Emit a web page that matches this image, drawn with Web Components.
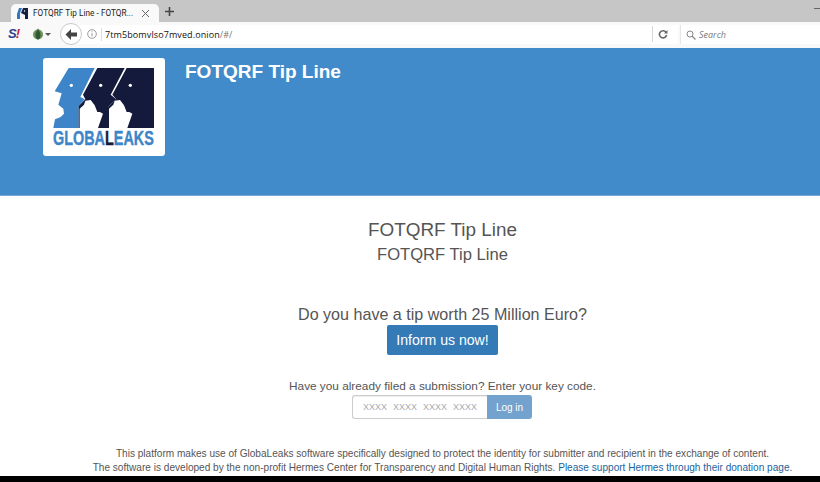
<!DOCTYPE html>
<html>
<head>
<meta charset="utf-8">
<title>FOTQRF Tip Line</title>
<style>
  html, body { margin: 0; height: 100%; overflow: hidden; background: #fff; }
  body { display: flex; flex-direction: column; height: 482px; font-family: "Liberation Sans", Arial, sans-serif; color: #555; }
</style>
</head>
<body>
<browser-chrome></browser-chrome>
<site-header>FOTQRF Tip Line</site-header>
<tip-content></tip-content>
<script>
class BrowserChrome extends HTMLElement {
  constructor() {
    super();
    this.attachShadow({ mode: "open" });
    this.shadowRoot.innerHTML = `
      <style>
        :host { display: block; height: 48px; flex: none; font-family: Roboto, sans-serif; }
        .tabs { height: 22px; background: #c6c6c6; display: flex; align-items: flex-end; position: relative; }
        .tab { width: 148px; height: 18px; margin-left: 11px; background: #f9f9f9; border-radius: 5px 5px 0 0; display: flex; align-items: center; padding: 0 9px 0 6px; box-sizing: border-box; font-size: 8.200px; letter-spacing: .05px; color: #222; gap: 5px; }
        .tab span { flex: 1; white-space: nowrap; }
        .plus { margin-left: 6px; height: 22px; display: flex; align-items: center; }
        .min { position: absolute; right: 0; top: 8px; width: 6px; height: 1px; background: #666; }
        .bar { height: 26px; background: #f9f9f9; display: flex; align-items: center; position: relative; }
        .s { position: absolute; left: 8px; top: 4px; font: italic bold 13px "Liberation Sans", sans-serif; color: #2b3f8f; letter-spacing: -1px; }
        .s b { color: #d3202a; }
        .onion { position: absolute; left: 32px; top: 6px; }
        .back { position: absolute; left: 60px; top: 1px; width: 22px; height: 22px; border-radius: 50%; background: #fff; border: 1px solid #c9c9c9; box-sizing: border-box; display: flex; align-items: center; justify-content: center; z-index: 1; }
        .url { position: absolute; left: 72px; top: 3px; width: 606px; height: 19px; background: #fff; display: flex; align-items: center; box-sizing: border-box; }
        .info { position: absolute; left: 15px; top: 4px; }
        .sep { position: absolute; left: 29px; top: 3px; height: 13px; width: 1px; background: #ddd; }
        .addr { margin-left: 33px; font: 9px "Open Sans", sans-serif; color: #111; letter-spacing: .1px; }
        .addr i { font-style: normal; color: #777; }
        .reload { position: absolute; right: 0; top: 1px; height: 16px; width: 26px; border-left: 1px solid #d8d8d8; display: flex; align-items: center; padding-left: 5px; box-sizing: border-box; }
        .search { position: absolute; left: 680px; right: 0; top: 3px; height: 19px; background: #fff; border-left: 1px solid #e6e6e6; display: flex; align-items: center; gap: 3px; padding-left: 5px; font: italic 9px "Open Sans", sans-serif; color: #777; }
        svg { display: block; flex: none; }
      </style>
      <div class="tabs">
        <div class="tab">
          <svg width="11" height="11" viewBox="0 0 11 11"><path d="M2 0h3L3 5v6H0V6z" fill="#2f77c0"/><path d="M6 0h5v11H8V7L6 6 4 5z" fill="#16203f"/><circle cx="7.500" cy="3" r=".7" fill="#fff"/></svg>
          <span>FOTQRF Tip Line - FOTQR...</span>
          <svg width="9" height="9" viewBox="0 0 9 9"><path d="M1 1l7 7M8 1 1 8" stroke="#666" fill="none"/></svg>
        </div>
        <div class="plus"><svg width="9" height="9" viewBox="0 0 9 9"><path d="M4.500 0v9M0 4.500h9" stroke="#444" stroke-width="1.600"/></svg></div>
        <div class="min"></div>
      </div>
      <div class="bar">
        <div class="s">S<b>!</b></div>
        <svg class="onion" width="21" height="12" viewBox="0 0 21 12"><circle cx="6" cy="6.500" r="5" fill="#6d8f5c"/><path d="M6 0C5.500 3 3.500 4 3.500 7S5 11.500 6 11.500 8.500 10 8.500 7 6.500 3 6 0z" fill="#2f5a30"/><path d="M13 5h6l-3 3z" fill="#555"/></svg>
        <div class="url">
          <svg class="info" width="10" height="10" viewBox="0 0 10 10"><circle cx="5" cy="5" r="4.300" stroke="#999" fill="none"/><path d="M5 4.300v3M5 2.300v1" stroke="#999"/></svg>
          <div class="sep"></div>
          <span class="addr">7tm5bomvlso7mved.onion<i>/#/</i></span>
          <div class="reload"><svg width="10" height="10" viewBox="0 0 10 10"><path d="M8 3.200A3.600 3.600 0 1 0 8.600 6" stroke="#666" stroke-width="1.600" fill="none"/><path d="M9.500 1v3.600H6z" fill="#666"/></svg></div>
        </div>
        <div class="back"><svg width="12" height="11" viewBox="0 0 12 11"><path d="M6 0 .5 5.500 6 11V7.500h6v-4H6z" fill="#444"/></svg></div>
        <div class="search">
          <svg width="10" height="10" viewBox="0 0 10 10"><circle cx="4" cy="4" r="3" stroke="#888" fill="none"/><path d="M6 6l3.500 3.500" stroke="#888" stroke-width="1.300"/></svg>
          <span>Search</span>
        </div>
      </div>
    `;
  }
}
customElements.define("browser-chrome", BrowserChrome);

class GlobaleaksLogo extends HTMLElement {
  constructor() {
    super();
    this.attachShadow({ mode: "open" });
    this.shadowRoot.innerHTML = `
      <style>
        :host { display: block; width: 122px; height: 98px; background: #fff; border-radius: 3px; padding: 4px 5px; box-sizing: border-box; flex: none; position: relative; }
        svg { display: block; }
        /* no condensed face is installed, so squeeze the bold one */
        .word { position: absolute; left: 10px; top: 70px; font: bold 20px/20px "Liberation Sans", sans-serif; color: #3d85c8; white-space: nowrap; transform: scaleX(.72); transform-origin: left top; -webkit-text-stroke: .4px #3d85c8; }
        .word b { color: #141a3c; -webkit-text-stroke: .4px #141a3c; }
      </style>
      <svg width="112" height="90" viewBox="0 0 336 270">
        <path d="M62 18H140L97 105 110 112 92 132V198H16L21 172 38 165 48 155 46 140 31 128 41 94 20 88z" fill="#3d85c8"/>
        <path d="M148 18H230L188 98 205 112 180 134V198H92V132L112 112 105 98z" fill="#141a3c"/>
        <path d="M236 18H318V198H180V134L205 112 193 98z" fill="#141a3c"/>
        <path d="M95 198V140L108 128 112 116 128 114 140 130 148 150 156 150 165 155 150 198z" fill="#fff"/>
        <path d="M183 198V140L196 128 200 116 216 114 228 130 236 150 244 150 253 155 238 198z" fill="#fff"/>
        <circle cx="70" cy="70" r="5" fill="#fff"/>
        <circle cx="158" cy="70" r="5" fill="#fff"/>
        <circle cx="247" cy="70" r="5" fill="#fff"/>
      </svg>
      <div class="word">GLOBA<b>L</b>EAKS</div>
    `;
  }
}
customElements.define("globaleaks-logo", GlobaleaksLogo);

class SiteHeader extends HTMLElement {
  constructor() {
    super();
    this.attachShadow({ mode: "open" });
    this.shadowRoot.innerHTML = `
      <style>
        :host { display: flex; height: 148px; flex: none; background: #428bca; padding: 10px 0 0 43px; box-sizing: border-box; gap: 20px; border-bottom: 1px solid #74a8d8; }
        h1 { margin: 2px 0 0; font-size: 19px; line-height: 24px; color: #fff; font-weight: bold; }
      </style>
      <globaleaks-logo></globaleaks-logo>
      <h1><slot></slot></h1>
    `;
  }
}
customElements.define("site-header", SiteHeader);

class KeyLogin extends HTMLElement {
  constructor() {
    super();
    this.attachShadow({ mode: "open" });
    this.shadowRoot.innerHTML = `
      <style>
        :host { display: flex; justify-content: center; font-size: 9px; margin-right: 1px; }
        .field { width: 135px; height: 24px; box-sizing: border-box; border: 1px solid #ccc; border-right: 0; border-radius: 3px 0 0 3px; color: #aaa; display: flex; align-items: center; justify-content: center; word-spacing: 3.500px; background: #fff; box-shadow: inset 0 1px 1px rgba(0,0,0,.075); }
        button { width: 45px; height: 24px; padding: 0; border: 0; border-radius: 0 3px 3px 0; background: #72a2cd; color: #fff; font: 10px "Liberation Sans", sans-serif; }
      </style>
      <div class="field">XXXX XXXX XXXX XXXX</div>
      <button>Log in</button>
    `;
  }
}
customElements.define("key-login", KeyLogin);

class TipContent extends HTMLElement {
  constructor() {
    super();
    this.attachShadow({ mode: "open" });
    this.shadowRoot.innerHTML = `
      <style>
        :host { display: flex; flex-direction: column; flex: 1; min-height: 0; text-align: center; color: #555; }
        main { flex: 1; padding: 22px 0 0 65px; }
        h2, h3, h4, p { margin: 0; font-weight: normal; }
        h2 { font-size: 18.900px; line-height: 24px; }
        h3 { font-size: 16.600px; line-height: 24px; margin-top: 1px; }
        h4 { font-size: 16.100px; line-height: 22px; margin-top: 36px; }
        .cta { display: block; width: 111px; height: 30px; margin: 0 auto; padding: 0; border: 0; border-radius: 2px; background: #337ab7; color: #fff; font: 14.100px "Liberation Sans", sans-serif; }
        .ask { font-size: 11.800px; line-height: 16px; margin: 23px 0 1px; }
        footer { margin-top: 28px; font-size: 10.090px; line-height: 14px; white-space: nowrap; }
        a { color: #23639c; text-decoration: none; }
        .black { height: 6px; background: #000; flex: none; }
      </style>
      <main>
        <h2>FOTQRF Tip Line</h2>
        <h3>FOTQRF Tip Line</h3>
        <h4>Do you have a tip worth 25 Million Euro?</h4>
        <button class="cta">Inform us now!</button>
        <p class="ask">Have you already filed a submission? Enter your key code.</p>
        <key-login></key-login>
        <footer>
          <div>This platform makes use of GlobaLeaks software specifically designed to protect the identity for submitter and recipient in the exchange of content.</div>
          <div>The software is developed by the non-profit Hermes Center for Transparency and Digital Human Rights. <a href="#">Please support Hermes through their donation page.</a></div>
        </footer>
      </main>
      <div class="black"></div>
    `;
  }
}
customElements.define("tip-content", TipContent);
</script>
</body>
</html>
